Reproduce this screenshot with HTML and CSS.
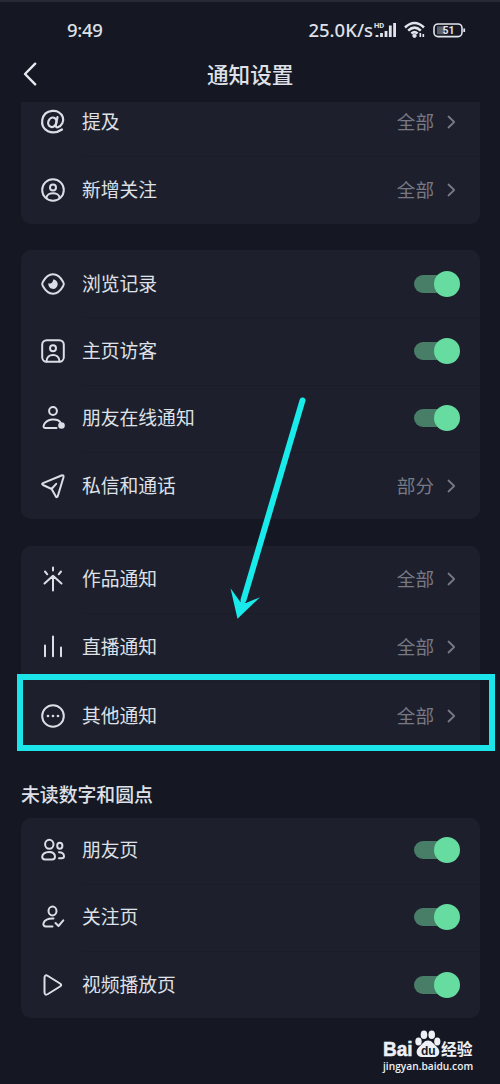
FILE: index.html
```html
<!DOCTYPE html>
<html lang="zh-CN">
<head>
<meta charset="utf-8">
<title>通知设置</title>
<link rel="stylesheet" href="styles.css">
</head>
<body>
<main class="screen">
  <header class="status">
    <span class="time">9:49</span>
    <div class="indicators">
      <span class="speed">25.0K/s</span>
      <svg class="signal" width="24" height="18" viewBox="0 0 24 18">
        <text x="0" y="6.500" class="hd">HD</text>
        <path d="M3 16v-2M7.500 16v-4M12 16v-6M16.300 16V4.500M20.600 16V2" stroke-width="2.800"/>
      </svg>
      <svg class="wifi" width="22" height="18" viewBox="0 0 22 18">
        <path d="M1 6.500Q10.500-2.500 20 6.500M4.200 9.600Q10.500 3.600 16.800 9.600M7.400 12.500Q10.500 9.700 13.600 12.500" fill="none" stroke-width="2.500"/>
        <circle cx="10.500" cy="14.800" r="1.700" fill="#e2e4ec"/>
        <path d="M16.300 12v4M19.300 13v3" stroke-width="1.700"/>
      </svg>
      <svg class="battery" width="33" height="15" viewBox="0 0 33 15">
        <rect x="1" y="1" width="28" height="12.600" rx="4" fill="none" stroke-width="1.600"/>
        <path d="M4 3.300h8v8H4z" class="charge"/>
        <path d="M31.200 5.500v3.500" stroke-width="1.800"/>
        <text x="9.500" y="11.300" class="level">51</text>
      </svg>
    </div>
  </header>
  <nav class="titlebar">
    <svg class="back" width="14" height="24" viewBox="0 0 14 24"><path d="M12.200 1.700 2 12l10.200 10.300"/></svg>
    <h1>通知设置</h1>
  </nav>

  <section class="card first">
    <div class="row"><svg class="icon at" viewBox="0 0 24 24"><ellipse cx="11.300" cy="12.300" rx="4" ry="4.800" transform="rotate(20 11.300 12.300)"/><path d="m16.500 7-1.700 8c-.3 2 .8 2.500 2 2.200 4-1.200 6.500-5.800 5-10C18.500-2 3.500-1.200 1.300 9.800c-1.800 11 10.200 16 19.700 9.700"/></svg><span class="label">提及</span><span class="value">全部</span><svg class="chev" viewBox="0 0 9 14"><path d="m1.500 1.500 5.700 5.500-5.700 5.500"/></svg></div>
    <div class="row"><svg class="icon" viewBox="0 0 24 24"><circle cx="12" cy="12" r="10.800"/><circle cx="12" cy="9.500" r="3"/><path d="M5.500 19.700c.5-5.800 12.500-5.800 13 0"/></svg><span class="label">新增关注</span><span class="value">全部</span><svg class="chev" viewBox="0 0 9 14"><path d="m1.500 1.500 5.700 5.500-5.700 5.500"/></svg></div>
  </section>

  <section class="card activity">
    <div class="row"><svg class="icon" viewBox="0 0 24 24"><path d="M1.800 10C7.500-.3 16.500-.3 22.200 10q1.300 2 0 4c-5.700 10.300-14.700 10.300-20.400 0q-1.300-2 0-4Z"/><path class="solid" d="M12 7.500a4.700 4.700 0 1 1-4.500 3.500c2 1.700 5-.8 4.500-3.500Z"/></svg><span class="label">浏览记录</span><span class="toggle"></span></div>
    <div class="row"><svg class="icon" viewBox="0 0 24 24"><rect x="1.200" y="1.200" width="21.600" height="21.600" rx="4.500"/><circle cx="12" cy="9.200" r="3"/><path d="M5.500 22.500c0-8.800 13-8.800 13 0"/></svg><span class="label">主页访客</span><span class="toggle"></span></div>
    <div class="row"><svg class="icon" viewBox="0 0 24 24"><circle cx="12" cy="5" r="3.900"/><path d="M15.500 22H4.200c-1.700 0-2-1.600-1.200-3.400 3-6.300 13.500-6.500 16.300-2.300"/><circle class="solid" cx="20.500" cy="19.500" r="3.300"/></svg><span class="label">朋友在线通知</span><span class="toggle"></span></div>
    <div class="row"><svg class="icon" viewBox="0 0 24 24"><path d="M2 9.200 20.500 1.500q2.500-.7 2 1.800L16.800 22q-.9 2.200-2.200.1l-4-7.100L2 11q-1.600-.9 0-1.800ZM10.500 15l4.700-5.200"/></svg><span class="label">私信和通话</span><span class="value">部分</span><svg class="chev" viewBox="0 0 9 14"><path d="m1.500 1.500 5.700 5.500-5.700 5.500"/></svg></div>
  </section>

  <section class="card content">
    <div class="row"><svg class="icon" viewBox="0 0 24 24"><path d="M12 23.500V9M3.500 16.500 12 8.800l8.500 7.700M12 .5v3M4 4.500l2.300 2.800M20 4.500l-2.300 2.800"/></svg><span class="label">作品通知</span><span class="value">全部</span><svg class="chev" viewBox="0 0 9 14"><path d="m1.500 1.500 5.700 5.500-5.700 5.500"/></svg></div>
    <div class="row"><svg class="icon" viewBox="0 0 24 24"><path d="M4 10.500v10.700M12 1.500v19.700M20 12.500v8.700"/></svg><span class="label">直播通知</span><span class="value">全部</span><svg class="chev" viewBox="0 0 9 14"><path d="m1.500 1.500 5.700 5.500-5.700 5.500"/></svg></div>
    <div class="row"><svg class="icon" viewBox="0 0 24 24"><circle cx="12" cy="12" r="10.800"/><g class="solid"><circle cx="7" cy="12" r="1.350"/><circle cx="12" cy="12" r="1.350"/><circle cx="17" cy="12" r="1.350"/></g></svg><span class="label">其他通知</span><span class="value">全部</span><svg class="chev" viewBox="0 0 9 14"><path d="m1.500 1.500 5.700 5.500-5.700 5.500"/></svg></div>
  </section>

  <h2>未读数字和圆点</h2>
  <section class="card pages">
    <div class="row"><svg class="icon" viewBox="0 0 24 24"><ellipse cx="8.300" cy="6.300" rx="4.200" ry="4.500"/><path d="M8 14c4 0 6 2.200 6 4.800 0 2-1 2.700-2.800 2.700H4c-1.800 0-2.800-.7-2.800-2.700C1.200 16.200 4 14 8 14Z"/><ellipse cx="18.800" cy="7.800" rx="2.600" ry="3"/><path d="M18 14.200c3 0 5 1.800 5 4 0 1.500-1 2-2.200 2H18"/></svg><span class="label">朋友页</span><span class="toggle"></span></div>
    <div class="row"><svg class="icon" viewBox="0 0 24 24"><ellipse cx="11.500" cy="6" rx="4" ry="4.400"/><path d="M12.500 13.500C7 13.300 3.500 15 2.500 18.300c-.5 2 .5 3.200 2.500 3.200h6.500M14.500 18l3 3 4.800-5.700"/></svg><span class="label">关注页</span><span class="toggle"></span></div>
    <div class="row"><svg class="icon" viewBox="0 0 24 24"><path d="M3.500 5v14q0 4 3.500 2l12-7.500q2.400-1.500 0-3L7 3Q3.500 1 3.500 5Z"/></svg><span class="label">视频播放页</span><span class="toggle"></span></div>
  </section>

  <div class="highlight"></div>
  <svg class="arrow" width="80" height="230" viewBox="0 0 80 230"><path d="M72.500 10.500 13.500 210" class="shaft"/><path d="M7.500 228.700.5 198.300 10 211.500l6 1.500 14-5.800Z" class="head"/></svg>

  <div class="watermark">
    <div class="brand"><span class="bai">Bai</span><svg class="paw" width="26" height="28" viewBox="0 0 26 28"><ellipse cx="3.500" cy="11.500" rx="3.200" ry="3.900"/><ellipse cx="9" cy="4.700" rx="3.300" ry="4.300"/><ellipse cx="16.700" cy="4.700" rx="3.300" ry="4.300"/><ellipse cx="22.300" cy="11.500" rx="3.100" ry="3.900"/><path d="M13 10.500c4 0 5.500 3.700 8.500 6 5 4.300 3 10.500-2.500 10.500H7C1.500 27-.5 20.800 4.500 16.500 7.500 14.200 9 10.500 13 10.500Z"/><text x="6" y="24.700">du</text></svg><span class="jy">经验</span></div>
    <span class="url">jingyan.baidu.com</span>
  </div>
</main>
</body>
</html>
```
FILE: styles.css
```css
* { box-sizing: border-box; }
body { margin: 0; background: #151823; }
.screen {
  position: relative;
  width: 500px;
  height: 1084px;
  overflow: hidden;
  padding: 0 20px 0 21px;
  border-top: 2px solid #252a36;
  background: #151823;
  color: #dfe0e8;
  font-family: "Noto Sans CJK SC", sans-serif;
}
svg { display: block; flex: none; overflow: visible; }
.status {
  display: flex;
  justify-content: space-between;
  align-items: center;
  height: 46px;
  padding: 10px 14px 0 46px;
}
.time { font: 500 18.500px/20px "Noto Sans", sans-serif; letter-spacing: -.3px; }
.indicators { display: flex; align-items: center; }
.speed { font: 500 18.500px/20px "Noto Sans", sans-serif; }
.status svg { stroke: #e2e4ec; }
.signal { margin-left: 1px; }
.wifi { margin-left: 6px; }
.battery { margin-left: 7px; }
.status text { fill: #e2e4ec; stroke: none; }
.hd { font: 700 7.500px Roboto, sans-serif; }
.level { font: 700 10.500px Roboto, sans-serif; }
.status .charge { fill: #5c606c; stroke: none; }
.titlebar { display: flex; align-items: center; height: 54px; padding-bottom: 2px; }
.back { margin-left: 2px; fill: none; stroke: #e8e9ef; stroke-width: 2.400; stroke-linecap: round; stroke-linejoin: round; }
h1 { margin: 0 0 0 170px; font-size: 21.600px; line-height: 30px; font-weight: 500; }
.card { border-radius: 10px; background: #1d202c; overflow: hidden; }
.row { display: flex; align-items: center; height: 67.300px; padding: 0 21px 0 20px; }
.row + .row { background: linear-gradient(#1a1d28, #1a1d28) 61px 0 / 398px 1px no-repeat; }
.first { height: 122px; border-radius: 0 0 10px 10px; }
.first .row { height: 68px; }
.first .row:first-child { margin-top: -14px; }
.activity { height: 269px; margin-top: 26px; }
.content { height: 205px; margin-top: 26.500px; }
.content .row { height: 68.500px; }
.content .row:first-child { margin-top: -1px; }
.pages { height: 200px; }
.pages .row { height: 67.300px; }
.pages .row:first-child { margin-top: -1px; }
.icon { width: 24px; height: 24px; fill: none; stroke: #dcdde5; stroke-width: 2; stroke-linecap: round; stroke-linejoin: round; }
.icon.at { stroke-width: 2.200; }
.icon .solid { fill: #dcdde5; stroke: none; }
.label { margin-left: 17px; padding-bottom: 2px; font-size: 18.800px; line-height: 26px; white-space: nowrap; }
.value { margin-left: auto; padding-bottom: 2px; font-size: 18.600px; line-height: 26px; color: #777985; }
.chev { width: 9px; height: 14px; margin: 0 3px 0 13px; fill: none; stroke: #777985; stroke-width: 1.800; stroke-linecap: round; stroke-linejoin: round; }
.toggle { display: flex; align-items: center; justify-content: flex-end; width: 45px; height: 18px; margin-left: auto; border-radius: 9px; background: #487d67; }
.toggle::after { content: ""; flex: none; width: 26px; height: 26px; margin-right: -1px; border-radius: 50%; background: #66dca0; }
h2 { height: 67px; margin: 0; padding-top: 29px; font-size: 18.850px; line-height: 28px; font-weight: 500; }
.highlight { position: absolute; left: 17px; top: 672px; width: 478px; height: 77px; border: 6px solid #1be5e9; }
.arrow { position: absolute; left: 230px; top: 388px; }
.shaft { fill: none; stroke: #19eaea; stroke-width: 6; stroke-linecap: round; }
.head { fill: #19eaea; }
.watermark { position: absolute; left: 383px; top: 1026px; color: #edf0f5; }
.brand { display: flex; align-items: flex-end; height: 31px; }
.bai { width: 32px; font: 700 20px/20px "Liberation Sans", sans-serif; -webkit-text-stroke: .5px #edf0f5; transform: scaleX(.95); transform-origin: left; }
.paw { margin-bottom: 1px; fill: #edf0f5; }
.paw text { fill: #151823; font: 700 12px "Liberation Sans", sans-serif; }
.jy { font-size: 15.800px; line-height: 21px; font-weight: 700; }
.url { display: block; margin-top: 1px; font: 600 10.200px/12px "Open Sans", sans-serif; }
```
